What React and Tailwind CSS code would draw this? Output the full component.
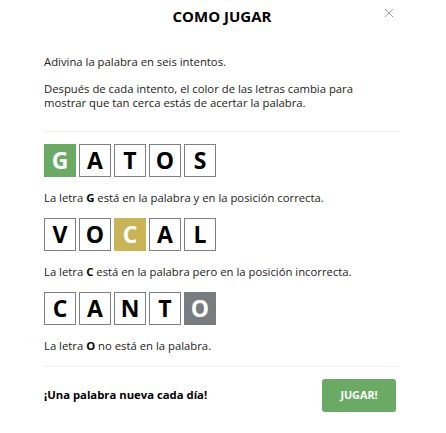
import React from 'react';

const rows = [
  { word: 'GATOS', idx: 0, color: 'bg-[#6aaa64]', letter: 'G', text: 'está en la palabra y en la posición correcta.' },
  { word: 'VOCAL', idx: 2, color: 'bg-[#c9b458]', letter: 'C', text: 'está en la palabra pero en la posición incorrecta.' },
  { word: 'CANTO', idx: 4, color: 'bg-[#787c7e]', letter: 'O', text: 'no está en la palabra.' },
];

function Tile({ ch, color }) {
  if (color) {
    return (
      <div className={`w-[32px] h-[33px] ${color} flex items-center justify-center text-white text-[23px] font-bold`}>
        {ch}
      </div>
    );
  }
  return (
    <div className="w-[32px] h-[33px] border-[1.5px] border-[#7d7f81] flex items-center justify-center text-black text-[23px] font-bold">
      {ch}
    </div>
  );
}

export default function App() {
  return (
    <div className="w-[446px] h-[433px] bg-white relative text-[#222]" style={{ fontFamily: '"Open Sans", "Noto Sans", sans-serif' }}>
      <div className="px-[44px] pr-[46px]">
        <h1 className="pt-[6px] text-center text-[15px] leading-[20px] font-bold text-black">COMO JUGAR</h1>

        <p className="mt-[29px] text-[11.3px] leading-[14px]">Adivina la palabra en seis intentos.</p>
        <p className="mt-[13px] text-[11.3px] leading-[14px]">
          Después de cada intento, el color de las letras cambia para<br />
          mostrar que tan cerca estás de acertar la palabra.
        </p>

        <div className="mt-[21px] h-px bg-[#eeeeee]" />

        <div className="mt-[12px]">
          {rows.map((r, i) => (
            <div key={r.word} className={i === 0 ? '' : 'mt-[13px]'}>
              <div className="flex gap-[3px]">
                {r.word.split('').map((ch, j) => (
                  <Tile key={j} ch={ch} color={j === r.idx ? r.color : null} />
                ))}
              </div>
              <p className="mt-[14px] text-[11.3px] leading-[14px]">
                La letra <b className="text-black">{r.letter}</b> {r.text}
              </p>
            </div>
          ))}
        </div>

        <div className="mt-[13px] h-px bg-[#eeeeee]" />

        <div className="mt-[12px] flex items-center justify-between pr-[4px]">
          <span className="text-[11.3px] font-bold text-black">¡Una palabra nueva cada día!</span>
          <button className="w-[74px] h-[33px] rounded-[3px] bg-[#6aaa64] text-white text-[10.8px] font-bold">JUGAR!</button>
        </div>
      </div>

      <div className="absolute left-[384px] top-[8px] w-[10px] h-[10px]">
        <svg viewBox="0 0 10 10" width="10" height="10">
          <path d="M1 1 L9 9 M9 1 L1 9" stroke="#9a9a9a" strokeWidth="1" fill="none" />
        </svg>
      </div>
    </div>
  );
}
